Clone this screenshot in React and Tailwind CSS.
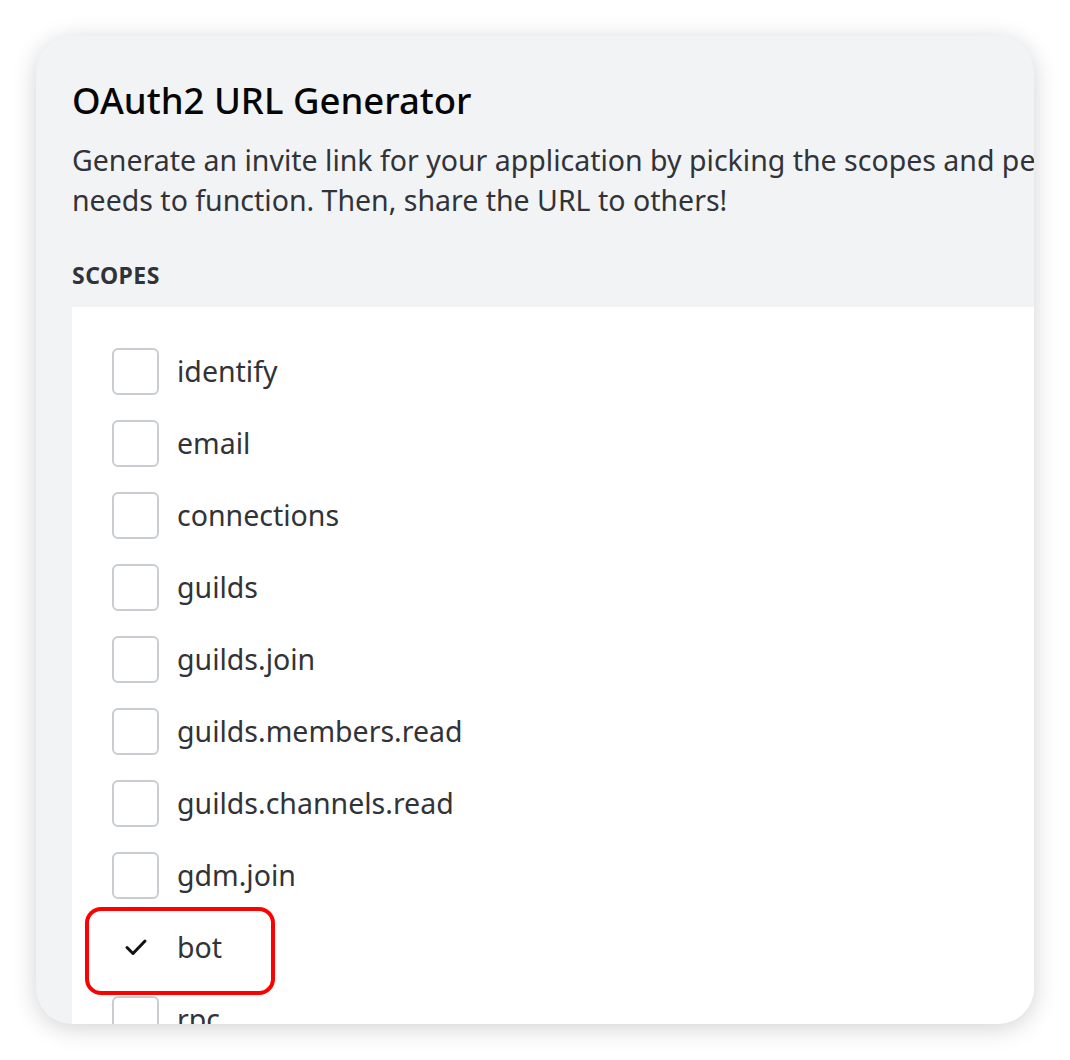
import React from 'react';

const scopes = [
    'identify',
    'email',
    'connections',
    'guilds',
    'guilds.join',
    'guilds.members.read',
    'guilds.channels.read',
    'gdm.join',
    'bot',
    'rpc',
];

const ScopeRow = ({ name, checked }) => {
    return (
        <div className="relative flex items-center h-[72px] gap-[18px]">
            {checked ? (
                <div className="w-[47px] h-[47px] flex items-center justify-center">
                    <svg width="24" height="20" viewBox="0 0 24 20" fill="none">
                        <path d="M3 10.5 L9 16.5 L21 4" stroke="#111214" strokeWidth="3" strokeLinecap="round" strokeLinejoin="round" />
                    </svg>
                </div>
            ) : (
                <div className="w-[47px] h-[47px] rounded-[6px] border-2 border-[#c9cdd2] bg-white"></div>
            )}
            <span className="text-[28.5px] text-[#313338] leading-none">{name}</span>
            {checked && (
                <div className="absolute top-[-4px] left-[-27px] w-[190px] h-[88px] border-[4px] border-[#ff0000] rounded-[16px]"></div>
            )}
        </div>
    );
};

const App = () => {
    return (
        <div className="min-h-screen bg-white p-[36px]" style={{ fontFamily: '"Noto Sans", "Open Sans", sans-serif' }}>
            <div className="w-[998px] h-[988px] rounded-[36px] overflow-hidden bg-[#f2f3f5] shadow-[0_4px_24px_rgba(0,0,0,0.18)]">
                <div className="w-[1400px] pl-[36px] pt-[38px]">
                    <h1 className="text-[36.5px] font-medium text-[#060607] leading-[52px]">OAuth2 URL Generator</h1>
                    <p className="mt-[14px] w-[1120px] text-[28.5px] leading-[40px] text-[#313338]">
                        Generate an invite link for your application by picking the scopes and permissions it needs to function. Then, share the URL to others!
                    </p>
                    <h2 className="mt-[43px] text-[23px] font-bold uppercase tracking-[0.02em] text-[#313338] leading-[24px]">Scopes</h2>
                    <div className="mt-[20px] bg-white pl-[40px] pt-[28px] pb-[40px]">
                        {scopes.map((s) => (
                            <ScopeRow key={s} name={s} checked={s === 'bot'} />
                        ))}
                    </div>
                </div>
            </div>
        </div>
    );
};

export default App;
